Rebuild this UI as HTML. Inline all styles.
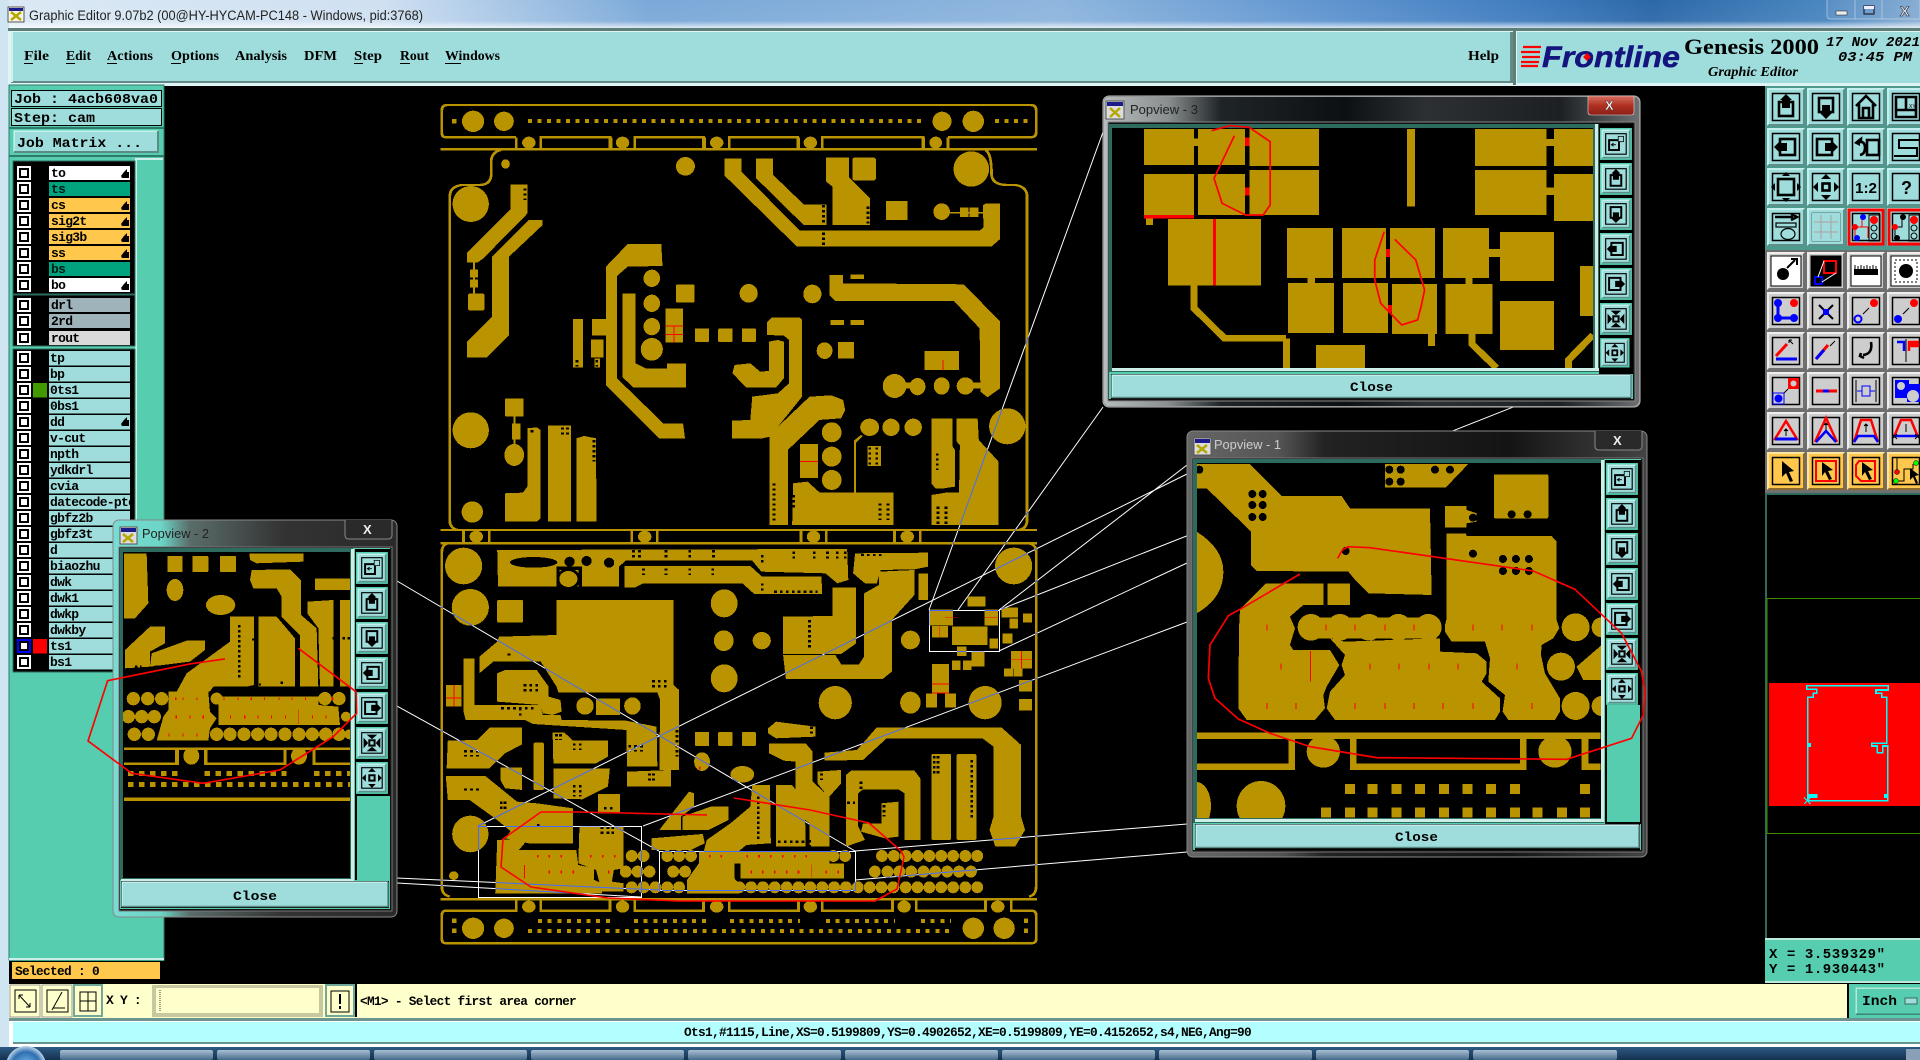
<!DOCTYPE html>
<html><head><meta charset="utf-8"><title>Graphic Editor</title>
<style>
html,body{margin:0;padding:0;background:#000;width:1920px;height:1060px;overflow:hidden}
svg{display:block}
.m{font:bold 13px "Liberation Mono",monospace;letter-spacing:-.7px;fill:#000}
.s{font:bold 14px "Liberation Serif",serif;fill:#000}
.pt{font:12.5px "Liberation Sans",sans-serif;fill:#222}
.g{fill:#ba9400}
.gl{fill:none;stroke:#ba9400;stroke-width:7}
.v{fill:none;stroke:#000;stroke-width:7;stroke-dasharray:7 8}
.r{fill:#f00}
.sc{fill:none;stroke:#f00;stroke-linejoin:round}
.px{shape-rendering:crispEdges}
.k{fill:none;stroke:#000;stroke-width:2.6}
.kk{fill:none;stroke:#000;stroke-width:1.2}
</style></head><body>
<svg xmlns="http://www.w3.org/2000/svg" width="1920" height="1060" viewBox="0 0 1920 1060">
<defs>
<linearGradient id="tb" x1="0" x2="1" y1="0" y2="0">
<stop offset="0" stop-color="#dbe9f5"/><stop offset=".2" stop-color="#cfe0f1"/><stop offset=".34" stop-color="#7aa8d8"/><stop offset=".55" stop-color="#8fb6de"/><stop offset=".7" stop-color="#5d93cf"/><stop offset=".8" stop-color="#3f7bbd"/><stop offset=".86" stop-color="#2c68a8"/><stop offset=".95" stop-color="#4a86c0"/><stop offset="1" stop-color="#8ab0d4"/></linearGradient>
<linearGradient id="tw" x1="0" x2="0" y1="0" y2="1"><stop offset="0" stop-color="#fff" stop-opacity="0"/><stop offset=".7" stop-color="#fff" stop-opacity=".05"/><stop offset="1" stop-color="#fff" stop-opacity=".95"/></linearGradient>
<linearGradient id="wg3" x1="0" x2="1" y1="0" y2="0"><stop offset="0" stop-color="#b7bdbd"/><stop offset=".12" stop-color="#8a8f90"/><stop offset=".22" stop-color="#1f2426"/><stop offset=".45" stop-color="#0c1013"/><stop offset=".6" stop-color="#2d3033"/><stop offset=".85" stop-color="#1d2023"/><stop offset="1" stop-color="#6d7072"/></linearGradient>
<linearGradient id="wg1" x1="0" x2="1" y1="0" y2="0"><stop offset="0" stop-color="#666"/><stop offset=".2" stop-color="#555"/><stop offset=".3" stop-color="#222"/><stop offset=".7" stop-color="#141414"/><stop offset="1" stop-color="#444"/></linearGradient>
<linearGradient id="wg2" x1="0" x2="1" y1="0" y2="0"><stop offset="0" stop-color="#79dcd4"/><stop offset=".17" stop-color="#6cd5c6"/><stop offset=".27" stop-color="#5a6d6a"/><stop offset=".6" stop-color="#333"/><stop offset="1" stop-color="#2a2a2a"/></linearGradient>
<linearGradient id="red" x1="0" x2="0" y1="0" y2="1"><stop offset="0" stop-color="#d87060"/><stop offset=".5" stop-color="#b03020"/><stop offset="1" stop-color="#8c2018"/></linearGradient>
<linearGradient id="task" x1="0" x2="0" y1="0" y2="1"><stop offset="0" stop-color="#2e5a85"/><stop offset="1" stop-color="#14304f"/></linearGradient>
<linearGradient id="tbt" x1="0" x2="0" y1="0" y2="1"><stop offset="0" stop-color="#a9bfd1"/><stop offset="1" stop-color="#466a8c"/></linearGradient>
<radialGradient id="orb"><stop offset="0" stop-color="#7ec0f0"/><stop offset=".7" stop-color="#2f6fb0"/><stop offset="1" stop-color="#bcd6e8"/></radialGradient>
<clipPath id="cp3"><rect x="1112" y="128" width="481" height="240"/></clipPath>
<clipPath id="cp1"><rect x="1197" y="463" width="404" height="355"/></clipPath>
<clipPath id="cp2"><rect x="123" y="552" width="227" height="326"/></clipPath>
<clipPath id="cpR"><rect x="1765" y="85" width="155" height="410"/></clipPath>

<g id="cb"><rect width="14" height="14" fill="#fff"/><rect x="2" y="2" width="10" height="10" fill="#000"/><rect x="4" y="4" width="6" height="6" fill="#fff"/></g>
<path id="hand" d="M0,7 L3,3 L6,0 L6,3 L8,3 V9 H1 Z" fill="#000"/>

<g id="bt"><rect width="38" height="38" fill="#5f8f8a"/><path d="M0,0H38L36,2H2V36L0,38Z" fill="#c5eeee"/><rect x="2" y="2" width="34" height="34" fill="#9fdcdc"/><rect x="5.5" y="5.5" width="27" height="27" fill="none" stroke="#000" stroke-width="1.500"/></g>
<g id="rim"><rect x="-2" y="-2" width="42" height="42" fill="#55cdae"/><use href="#bt"/></g>
<g id="bg"><rect width="38" height="38" fill="#707070"/><path d="M0,0H38L36,2H2V36L0,38Z" fill="#eee"/><rect x="2" y="2" width="34" height="34" fill="#cdcdcd"/><rect x="5.5" y="5.5" width="27" height="27" fill="none" stroke="#000" stroke-width="1.500"/></g>
<g id="bw"><rect width="38" height="38" fill="#707070"/><path d="M0,0H38L36,2H2V36L0,38Z" fill="#eee"/><rect x="2" y="2" width="34" height="34" fill="#cdcdcd"/><rect x="4" y="4" width="30" height="30" fill="#fff" stroke="#000" stroke-width="1"/></g>
<g id="by"><rect width="38" height="38" fill="#8a6a30"/><path d="M0,0H38L36,2H2V36L0,38Z" fill="#ffe4a0"/><rect x="2" y="2" width="34" height="34" fill="#ffc84d"/><rect x="5.5" y="5.5" width="27" height="27" fill="none" stroke="#000" stroke-width="1.500"/></g>

<g id="iu"><rect x="12" y="14" width="14" height="14" class="k"/><path d="M19,6L25,12H23V20H15V12H13Z"/></g>
<g id="id"><rect x="12" y="10" width="14" height="14" class="k"/><path d="M15,17H23V25H25L19,31L13,25H15Z"/></g>
<g id="il"><rect x="13" y="11" width="15" height="16" class="k"/><path d="M7,19L13,13V15H20V23H13V25Z"/></g>
<g id="ir"><rect x="10" y="11" width="15" height="16" class="k"/><path d="M31,19L25,13V15H18V23H25V25Z"/></g>
<g id="ifit"><rect x="11" y="11" width="16" height="16" class="k"/><path d="M19,4L23,8H15ZM19,34L15,30H23ZM4,19L8,15V23ZM34,19L30,23V15Z"/></g>
<g id="ifit2"><rect x="15.5" y="15.5" width="7" height="7" class="k"/><path d="M19,6L24,11H14ZM19,32L14,27H24ZM6,19L11,14V24ZM32,19L27,24V14Z"/></g>
<g id="iin"><rect x="15.5" y="15.5" width="7" height="7" class="k"/><path d="M12,8H26L19,14ZM12,30H26L19,24ZM8,12V26L14,19ZM30,12V26L24,19Z"/></g>
<g id="iw"><rect x="10" y="14" width="13" height="13" class="k"/><rect x="22" y="9" width="7" height="7" fill="#9fdcdc" stroke="#000"/><path d="M19,20H13M16,18L13,20L16,22" class="kk"/></g>
</defs>

<rect width="1920" height="1060" fill="#000"/>

<!-- title bar -->
<rect width="1920" height="30" fill="url(#tb)"/><rect width="1920" height="30" fill="url(#tw)"/>
<rect x="0" y="0" width="9" height="1060" fill="#cfe5f2"/>
<rect x="8" y="7" width="16" height="15" fill="#f5f5e8" stroke="#333" stroke-width=".8"/><rect x="9" y="8" width="14" height="3" fill="#1b1b8a"/><path d="M11,12L21,20M21,12L11,20" stroke="#b5a800" stroke-width="2.5"/>
<text x="29" y="20" style="font:13.5px 'Liberation Sans',sans-serif;fill:#222" textLength="394" lengthAdjust="spacingAndGlyphs">Graphic Editor 9.07b2 (00@HY-HYCAM-PC148 - Windows, pid:3768)</text>
<path d="M1827,0V15Q1827,19 1831,19H1920V0" fill="#7ea8cf" fill-opacity=".25" stroke="#dfeaf3" stroke-opacity=".5"/>
<path d="M1855,0V19M1882,0V19" stroke="#dfeaf3" stroke-opacity=".5"/>
<rect x="1836" y="11" width="11" height="4" fill="#eee" stroke="#333" stroke-width=".6"/>
<rect x="1864" y="6" width="10" height="8" fill="none" stroke="#223" stroke-width="1.2"/><rect x="1864" y="6" width="10" height="3" fill="#eef"/>
<text x="1900" y="16" style="font:bold 14px 'Liberation Sans',sans-serif;fill:#eee;stroke:#223;stroke-width:.6">X</text>

<!-- menu -->
<rect x="8" y="28" width="1912" height="58" fill="#dff5f5"/>
<rect x="8" y="28" width="1912" height="3" fill="#5d7f78"/>
<rect x="11" y="32" width="1501" height="51" fill="#9fdcdc"/>
<rect x="11" y="81" width="1501" height="2" fill="#648a85"/><rect x="11" y="32" width="2" height="50" fill="#cff0f0"/>
<rect x="1510" y="32" width="3" height="51" fill="#648a85"/>
<rect x="1517" y="32" width="403" height="51" fill="#9fdcdc"/><rect x="1513" y="30" width="3" height="55" fill="#5d7f78"/>
<text class="s" x="24" y="60" textLength="25" lengthAdjust="spacingAndGlyphs">File</text><rect x="24" y="63" width="9" height="1"/>
<text class="s" x="66" y="60" textLength="25" lengthAdjust="spacingAndGlyphs">Edit</text><rect x="66" y="63" width="9" height="1"/>
<text class="s" x="107" y="60" textLength="46" lengthAdjust="spacingAndGlyphs">Actions</text><rect x="107" y="63" width="10" height="1"/>
<text class="s" x="171" y="60" textLength="48" lengthAdjust="spacingAndGlyphs">Options</text><rect x="171" y="63" width="10" height="1"/>
<text class="s" x="235" y="60" textLength="52" lengthAdjust="spacingAndGlyphs">Analysis</text>
<text class="s" x="304" y="60" textLength="33" lengthAdjust="spacingAndGlyphs">DFM</text>
<text class="s" x="354" y="60" textLength="28" lengthAdjust="spacingAndGlyphs">Step</text><rect x="354" y="63" width="9" height="1"/>
<text class="s" x="400" y="60" textLength="29" lengthAdjust="spacingAndGlyphs">Rout</text><rect x="400" y="63" width="10" height="1"/>
<text class="s" x="445" y="60" textLength="55" lengthAdjust="spacingAndGlyphs">Windows</text><rect x="445" y="63" width="16" height="1"/>
<text class="s" x="1468" y="60" textLength="31" lengthAdjust="spacingAndGlyphs">Help</text>

<!-- logo -->
<path d="M1523,47H1541M1521,52H1540M1522,57H1540M1521,62H1539M1521,66H1538" stroke="#f00" stroke-width="2.2"/>
<text x="1542" y="67" style="font:italic bold 30px 'Liberation Sans',sans-serif;fill:#14147f;stroke:#14147f;stroke-width:.5" textLength="138" lengthAdjust="spacingAndGlyphs">Frontline</text>
<path d="M1583,67l4,-4 4,4 -4,4z" fill="#f00" transform="translate(0,-10)"/>
<text x="1684" y="54" style="font:bold 22px 'Liberation Serif',serif;fill:#000" textLength="135" lengthAdjust="spacingAndGlyphs">Genesis 2000</text>
<text x="1708" y="76" style="font:italic bold 14px 'Liberation Serif',serif;fill:#000" textLength="90" lengthAdjust="spacingAndGlyphs">Graphic Editor</text>
<text x="1826" y="46" style="font:italic bold 14px 'Liberation Mono',monospace;fill:#000" textLength="94" lengthAdjust="spacingAndGlyphs">17 Nov 2021</text>
<text x="1838" y="61" style="font:italic bold 14px 'Liberation Mono',monospace;fill:#000" textLength="74" lengthAdjust="spacingAndGlyphs">03:45 PM</text>

<!-- TOP BOARD -->
<g transform="translate(430,90) scale(.3954,.3333)" class="px">
<path class="gl" d="M218,142H42Q30,142 30,130V60Q30,45 45,45H1518Q1533,45 1533,60V128Q1533,142 1518,142H1310M27,178H1535M218,142V178M280,178V142H455V178M458,178V142M518,178V142H692V178M695,178V142M757,178V142H930V178M932,178V142M992,178V142H1247V178M1249,178V142M1310,178V142"/>
<g class="g"><ellipse cx="109" cy="94" rx="28" ry="32"/><ellipse cx="187" cy="94" rx="25" ry="29"/><ellipse cx="1295" cy="94" rx="24" ry="29"/><ellipse cx="1374" cy="94" rx="27" ry="32"/>
<rect x="56" y="87" width="11" height="13"/>
<ellipse cx="250" cy="158" rx="17" ry="18"/><ellipse cx="487" cy="158" rx="17" ry="18"/><ellipse cx="725" cy="158" rx="17" ry="18"/><ellipse cx="962" cy="158" rx="17" ry="18"/><ellipse cx="1279" cy="158" rx="16" ry="18"/></g>
<path d="M248,93H1250M1429,93H1515" fill="none" stroke="#ba9400" stroke-width="13" stroke-dasharray="10 14"/>
<path class="gl" d="M50,1290V320Q50,290 80,285H125Q155,285 155,250V210Q158,185 180,180M1405,180Q1420,190 1420,250Q1420,285 1460,285H1480Q1510,290 1510,320V1290Q1510,1315 1490,1320M50,1290Q50,1315 70,1320M27,1320H1535"/>
<g class="g">
<ellipse cx="103" cy="342" rx="46" ry="54"/><ellipse cx="103" cy="1021" rx="46" ry="54"/><ellipse cx="107" cy="1266" rx="27" ry="32"/><ellipse cx="1369" cy="237" rx="45" ry="53"/><ellipse cx="1460" cy="1009" rx="46" ry="54"/><ellipse cx="646" cy="229" rx="24" ry="28"/><ellipse cx="191" cy="222" rx="11" ry="14"/>
<polygon points="203,283 247,283 247,370 135,505 120,518 94,518 94,488 203,358"/>
<polygon points="250,390 285,390 285,405 200,500 200,735 143,803 94,803 94,755 157,680 157,500"/>
<rect x="101" y="538" width="20" height="24"/><rect x="101" y="568" width="20" height="24"/><rect x="109" y="518" width="5" height="92"/><rect x="96" y="610" width="42" height="52" rx="6"/>
<polygon points="745,205 788,205 788,245 935,422 1390,422 1400,412 1398,345 1408,340 1442,340 1442,447 1420,470 928,470 745,257"/>
<polygon points="825,205 868,205 868,255 945,343 1003,343 1003,405 945,405 825,265"/>
<polygon points="1002,202 1060,202 1060,262 1113,325 1113,405 1018,405 1018,290 1002,275"/>
<rect x="1068" y="202" width="60" height="70" rx="8"/><rect x="1153" y="333" width="55" height="57"/><ellipse cx="1294" cy="365" rx="21" ry="25"/><rect x="1315" y="366" width="85" height="4"/><rect x="1340" y="353" width="22" height="28"/><rect x="1365" y="353" width="22" height="28"/>
<polygon points="500,462 585,462 588,528 500,530 473,558 473,865 590,1000 640,1000 645,1046 580,1046 445,885 445,530"/>
<polygon points="487,610 520,610 520,820 545,835 600,835 600,820 647,820 647,893 515,893 487,862"/>
<ellipse cx="561" cy="565" rx="21" ry="26"/><ellipse cx="561" cy="640" rx="21" ry="26"/><ellipse cx="561" cy="710" rx="21" ry="26"/><ellipse cx="561" cy="778" rx="28" ry="34"/>
<rect x="622" y="583" width="47" height="55" rx="5"/><ellipse cx="806" cy="610" rx="23" ry="28"/><ellipse cx="967" cy="612" rx="23" ry="28"/>
<rect x="362" y="687" width="25" height="145"/><rect x="410" y="687" width="35" height="50"/><rect x="407" y="748" width="32" height="55"/><rect x="416" y="805" width="14" height="28"/>
<rect x="595" y="655" width="45" height="103"/>
<rect x="670" y="715" width="36" height="41" rx="3"/><rect x="729" y="715" width="36" height="41" rx="3"/><rect x="789" y="715" width="35" height="41" rx="3"/>
<polygon points="852,697 865,682 935,682 941,690 941,920 860,1040 838,1046 764,1046 764,992 810,990 815,920 880,910 908,880 908,750 895,737 852,735"/>
<polygon points="857,755 880,750 895,755 895,865 875,893 800,893 765,850 770,825 810,820 835,845 857,843"/>
<ellipse cx="998" cy="782" rx="20" ry="25"/><rect x="1032" y="756" width="40" height="50"/>
<polygon points="1010,555 1045,555 1045,580 1350,583 1442,695 1442,895 1410,922 1392,905 1390,715 1325,633 1025,633 1010,615"/>
<rect x="1063" y="553" width="34" height="14"/><rect x="1013" y="690" width="34" height="15"/><rect x="1063" y="690" width="34" height="15"/>
<rect x="1250" y="783" width="88" height="57"/>
<ellipse cx="1175" cy="888" rx="30" ry="36"/><ellipse cx="1233" cy="890" rx="20" ry="26"/><ellipse cx="1294" cy="888" rx="20" ry="26"/><ellipse cx="1354" cy="888" rx="22" ry="26"/><rect x="1190" y="878" width="30" height="18"/><rect x="1370" y="878" width="30" height="18"/>
<polygon points="960,920 1015,916 1045,930 1050,960 1040,985 985,990 905,1080 905,1305 858,1305 858,1035"/>
<ellipse cx="1016" cy="1027" rx="25" ry="30"/><ellipse cx="1016" cy="1100" rx="25" ry="30"/><ellipse cx="1016" cy="1170" rx="25" ry="30"/><rect x="936" y="1062" width="45" height="102"/>
<polygon points="918,1180 955,1175 985,1207 1172,1207 1172,1305 916,1305"/>
<polygon points="1072,1207 1078,1207 1078,1057 1095,1038 1090,1035 1072,1052"/>
<ellipse cx="1112" cy="1012" rx="24" ry="26"/><ellipse cx="1166" cy="1012" rx="22" ry="26"/><ellipse cx="1222" cy="1012" rx="22" ry="26"/><rect x="1106" y="1068" width="35" height="60"/>
<polygon points="1268,985 1322,985 1322,1070 1328,1080 1328,1190 1300,1195 1278,1195 1268,1180"/>
<polygon points="1332,985 1385,985 1388,1050 1438,1115 1438,1305 1268,1305 1268,1215 1305,1208 1338,1208 1340,1065 1332,1055"/>
<rect x="190" y="925" width="47" height="55" rx="4"/><rect x="207" y="1000" width="22" height="48"/><rect x="211" y="980" width="5" height="90"/><ellipse cx="213" cy="1095" rx="25" ry="33"/>
<polygon points="246,1015 270,1012 280,1020 280,1285 270,1295 190,1295 190,1210 235,1208 246,1190"/>
<rect x="298" y="1007" width="58" height="288"/>
<polygon points="370,1045 390,1038 420,1045 421,1295 370,1295"/>
</g>
<rect x="595" y="706" width="45" height="3" class="r"/><rect x="595" y="732" width="45" height="3" class="r"/><rect x="616" y="706" width="2" height="52" class="r"/><rect x="1296" y="810" width="3" height="30" class="r"/><rect x="936" y="1113" width="45" height="3" class="r"/>
<path class="v" d="M240,295V330M995,345V405M995,428V470M1108,350V400M870,1180V1295M920,1215V1260M1158,1240V1290M1138,1240V1290M1305,1250V1305M1285,1250V1305M1283,1090V1140M1265,1090V1140M1112,1072V1125M1130,1072V1125M348,1012V1035M335,1012V1035M415,1050V1115M258,1020V1035M372,810V830M422,810V830"/>
<rect x="405" y="737" width="38" height="4" fill="#000"/>
</g>

<!-- BOTTOM BOARD -->
<g transform="translate(430,530) scale(.3954,.3333)" class="px">
<path class="gl" d="M27,40H1535M45,40Q30,45 30,65V1070Q30,1095 50,1100M1515,40Q1533,45 1533,65V1070Q1533,1095 1515,1100M27,1108H1535M85,0V36M150,0V36M510,0V36M575,0V36M938,0V36M1002,0V36M1175,0V36M1240,0V36M218,1108V1142H42Q30,1142 30,1155V1228Q30,1240 42,1240H1520Q1533,1240 1533,1228V1155Q1533,1142 1520,1142H1470V1108M280,1108V1142H455V1108M518,1108V1142H692V1108M757,1108V1142H932V1108M992,1108V1142H1170V1108M1230,1108V1142H1405V1108"/>
<g class="g">
<ellipse cx="117" cy="20" rx="17" ry="18"/><ellipse cx="543" cy="20" rx="17" ry="18"/><ellipse cx="970" cy="20" rx="17" ry="18"/><ellipse cx="1207" cy="20" rx="17" ry="18"/>
<ellipse cx="250" cy="1130" rx="17" ry="18"/><ellipse cx="487" cy="1130" rx="17" ry="18"/><ellipse cx="725" cy="1130" rx="17" ry="18"/><ellipse cx="962" cy="1130" rx="17" ry="18"/><ellipse cx="1199" cy="1130" rx="17" ry="18"/><ellipse cx="1436" cy="1130" rx="17" ry="18"/>
<ellipse cx="109" cy="1195" rx="28" ry="32"/><ellipse cx="187" cy="1195" rx="25" ry="29"/><ellipse cx="1374" cy="1195" rx="27" ry="32"/><ellipse cx="1452" cy="1195" rx="27" ry="32"/>
<rect x="56" y="1166" width="11" height="13"/><rect x="56" y="1196" width="11" height="13"/><rect x="1502" y="1166" width="11" height="13"/><rect x="1502" y="1196" width="11" height="13"/>
<ellipse cx="85" cy="108" rx="47" ry="55"/><ellipse cx="102" cy="232" rx="47" ry="55"/><ellipse cx="1476" cy="108" rx="47" ry="55"/><ellipse cx="744" cy="220" rx="34" ry="42"/><ellipse cx="743" cy="332" rx="25" ry="31"/><ellipse cx="839" cy="332" rx="23" ry="26"/><ellipse cx="744" cy="445" rx="34" ry="42"/><ellipse cx="1025" cy="518" rx="42" ry="50"/><ellipse cx="1215" cy="518" rx="26" ry="33"/><ellipse cx="1215" cy="330" rx="24" ry="28"/><ellipse cx="1404" cy="518" rx="42" ry="50"/><ellipse cx="102" cy="912" rx="46" ry="55"/><ellipse cx="60" cy="1037" rx="12" ry="13"/>
<polygon points="170,60 1055,57 1058,150 1030,160 1000,130 838,125 815,92 495,92 478,110 478,170 172,170"/>
<polygon points="492,108 810,108 840,140 990,140 992,192 820,192 790,160 540,160 520,172 492,172"/>
<polygon points="1075,70 1260,68 1260,110 1225,118 1140,120 1130,160 1100,160 1070,130"/>
<polygon points="893,260 1018,258 1018,172 1078,172 1078,340 1040,372 893,372"/>
<polygon points="1135,125 1225,120 1225,195 1168,270 1168,425 1145,447 900,447 893,375 1025,375 1040,403 1085,403 1098,380 1098,190 1135,165"/>
<rect x="1235" y="130" width="25" height="80"/>
<polygon points="320,210 616,210 616,465 630,480 630,720 580,720 582,510 575,488 325,488 320,470 280,395 160,395 125,430 125,380 170,335 175,320 320,315"/>
<polygon points="170,430 190,420 270,420 300,470 300,500 330,510 333,545 310,555 285,550 280,525 170,515"/>
<polygon points="85,385 112,385 112,525 280,525 285,555 330,555 333,570 495,572 573,590 575,710 498,710 497,600 260,582 240,570 90,570 85,545"/>
<rect x="170" y="210" width="65" height="68" rx="4"/>
<ellipse cx="392" cy="528" rx="22" ry="26"/><rect x="420" y="505" width="60" height="50"/><ellipse cx="512" cy="528" rx="21" ry="26"/>
<polygon points="45,632 120,630 152,592 233,592 233,643 190,670 150,715 42,715"/>
<polygon points="310,608 340,608 362,632 450,632 450,680 420,700 312,700"/>
<polygon points="312,715 455,715 450,770 385,808 312,805"/>
<polygon points="178,712 233,712 233,780 190,775 178,750"/>
<rect x="262" y="638" width="26" height="142" rx="4"/>
<polygon points="40,738 140,738 220,815 270,820 362,835 362,940 250,940 215,915 170,870 100,810 45,810"/>
<rect x="425" y="792" width="55" height="58"/>
<polygon points="498,725 610,720 610,770 498,770"/>
<rect x="670" y="606" width="36" height="42" rx="3"/><rect x="729" y="606" width="36" height="42" rx="3"/><rect x="789" y="606" width="35" height="42" rx="3"/>
<ellipse cx="688" cy="695" rx="20" ry="28"/><ellipse cx="790" cy="733" rx="30" ry="25"/>
<polygon points="855,595 875,575 975,590 975,620 875,625 855,610"/>
<polygon points="857,640 950,640 968,665 968,755 1000,790 1000,950 960,950 960,880 925,850 925,695 895,692 857,670"/>
<polygon points="815,765 860,765 862,940 800,945 780,965 690,975 700,930 760,880 810,830"/>
<polygon points="875,765 915,765 948,810 950,950 875,950"/>
<polygon points="980,725 1040,720 1040,760 1010,800 1010,950 1000,950 1000,790 980,760"/>
<polygon points="1130,592 1445,592 1495,645 1495,860 1505,900 1480,950 1430,950 1415,900 1425,860 1425,650 1397,625 1155,625 1095,690 998,692 998,668 1080,660"/>
<polygon points="1052,735 1065,722 1225,722 1240,745 1240,930 1200,930 1200,790 1185,778 1095,778 1083,790 1083,890 1100,930 1052,950"/>
<polygon points="1142,820 1185,815 1185,920 1150,925 1090,905 1095,880 1142,880"/>
<rect x="1268" y="672" width="50" height="258" rx="5"/><rect x="1332" y="672" width="50" height="258" rx="5"/>
<polygon points="580,900 655,785 668,790 668,830 635,860 635,900"/>
<polygon points="638,860 710,830 755,830 755,870 705,900 638,900"/>
<polygon points="560,925 690,912 695,940 660,960 560,960"/>
<polygon points="250,830 362,835 362,940 250,940 190,925"/>
<polygon points="378,890 490,890 490,1015 465,1020 460,1055 490,1060 490,1085 435,1085 420,1020 375,1000"/>
<polygon points="170,930 250,925 225,960 370,960 375,1005 415,1015 415,1050 435,1060 435,1090 165,1090"/>
<polygon points="680,965 770,965 770,1045 780,1060 780,1090 650,1090 650,1050 680,1000"/>
<rect x="770" y="963" width="240" height="37"/><rect x="785" y="1000" width="262" height="45"/>
<ellipse cx="240" cy="978" rx="15" ry="18"/><ellipse cx="510" cy="978" rx="15" ry="18"/><ellipse cx="540" cy="978" rx="15" ry="18"/><ellipse cx="600" cy="978" rx="15" ry="18"/><ellipse cx="630" cy="978" rx="15" ry="18"/><ellipse cx="660" cy="978" rx="15" ry="18"/><ellipse cx="1020" cy="978" rx="15" ry="18"/><ellipse cx="1050" cy="978" rx="15" ry="18"/><ellipse cx="1143" cy="978" rx="15" ry="18"/><ellipse cx="1173" cy="978" rx="15" ry="18"/><ellipse cx="1203" cy="978" rx="15" ry="18"/><ellipse cx="1233" cy="978" rx="15" ry="18"/><ellipse cx="1263" cy="978" rx="15" ry="18"/><ellipse cx="1293" cy="978" rx="15" ry="18"/><ellipse cx="1323" cy="978" rx="15" ry="18"/><ellipse cx="1354" cy="978" rx="15" ry="18"/><ellipse cx="1384" cy="978" rx="15" ry="18"/>
<ellipse cx="495" cy="1025" rx="15" ry="18"/><ellipse cx="525" cy="1025" rx="15" ry="18"/><ellipse cx="555" cy="1025" rx="15" ry="18"/><ellipse cx="615" cy="1025" rx="15" ry="18"/><ellipse cx="645" cy="1025" rx="15" ry="18"/><ellipse cx="1125" cy="1025" rx="15" ry="18"/><ellipse cx="1157" cy="1025" rx="15" ry="18"/><ellipse cx="1187" cy="1025" rx="15" ry="18"/><ellipse cx="1217" cy="1025" rx="15" ry="18"/><ellipse cx="1248" cy="1025" rx="15" ry="18"/><ellipse cx="1278" cy="1025" rx="15" ry="18"/><ellipse cx="1308" cy="1025" rx="15" ry="18"/><ellipse cx="1338" cy="1025" rx="15" ry="18"/><ellipse cx="1368" cy="1025" rx="15" ry="18"/>
<ellipse cx="510" cy="1072" rx="15" ry="18"/><ellipse cx="540" cy="1072" rx="15" ry="18"/><ellipse cx="570" cy="1072" rx="15" ry="18"/><ellipse cx="600" cy="1072" rx="15" ry="18"/><ellipse cx="630" cy="1072" rx="15" ry="18"/><ellipse cx="782" cy="1072" rx="15" ry="18"/><ellipse cx="812" cy="1072" rx="15" ry="18"/><ellipse cx="842" cy="1072" rx="15" ry="18"/><ellipse cx="872" cy="1072" rx="15" ry="18"/><ellipse cx="902" cy="1072" rx="15" ry="18"/><ellipse cx="932" cy="1072" rx="15" ry="18"/><ellipse cx="962" cy="1072" rx="15" ry="18"/><ellipse cx="992" cy="1072" rx="15" ry="18"/><ellipse cx="1022" cy="1072" rx="15" ry="18"/><ellipse cx="1052" cy="1072" rx="15" ry="18"/><ellipse cx="1082" cy="1072" rx="15" ry="18"/><ellipse cx="1112" cy="1072" rx="15" ry="18"/><ellipse cx="1142" cy="1072" rx="15" ry="18"/><ellipse cx="1172" cy="1072" rx="15" ry="18"/><ellipse cx="1203" cy="1072" rx="15" ry="18"/><ellipse cx="1233" cy="1072" rx="15" ry="18"/><ellipse cx="1263" cy="1072" rx="15" ry="18"/><ellipse cx="1293" cy="1072" rx="15" ry="18"/><ellipse cx="1323" cy="1072" rx="15" ry="18"/><ellipse cx="1354" cy="1072" rx="15" ry="18"/><ellipse cx="1384" cy="1072" rx="15" ry="18"/>
<rect x="1263" y="238" width="60" height="48"/><rect x="1270" y="288" width="40" height="35"/><rect x="1320" y="290" width="90" height="55"/><rect x="1360" y="200" width="45" height="30"/><rect x="1402" y="238" width="35" height="48"/><rect x="1445" y="232" width="42" height="30"/><rect x="1465" y="265" width="22" height="30"/><rect x="1500" y="250" width="22" height="28"/><rect x="1448" y="310" width="25" height="30"/><rect x="1415" y="325" width="22" height="30"/><rect x="1320" y="392" width="22" height="28"/><rect x="1348" y="392" width="22" height="28"/><rect x="1370" y="365" width="32" height="45"/><rect x="1470" y="363" width="52" height="52"/><rect x="1452" y="415" width="22" height="25"/><rect x="1476" y="415" width="22" height="25"/><rect x="1270" y="402" width="42" height="88"/><rect x="1254" y="490" width="28" height="42"/><rect x="1302" y="490" width="28" height="42"/><rect x="1490" y="450" width="32" height="35"/><rect x="1490" y="507" width="32" height="35"/><rect x="40" y="465" width="40" height="65"/><rect x="1333" y="350" width="24" height="28"/>
</g>
<ellipse cx="350" cy="147" rx="30" ry="32" fill="#000"/><ellipse cx="350" cy="147" rx="23" ry="24" fill="#ba9400"/>
<rect x="320" y="110" width="62" height="10" fill="#000"/><rect x="320" y="110" width="8" height="60" fill="#000"/><rect x="376" y="110" width="8" height="60" fill="#000"/>
<ellipse cx="262" cy="97" rx="60" ry="16" fill="#000"/><ellipse cx="353" cy="95" rx="13" ry="15" fill="#000"/><ellipse cx="396" cy="93" rx="13" ry="15" fill="#000"/><ellipse cx="453" cy="98" rx="13" ry="15" fill="#000"/>
<path class="v" d="M515,60V85M530,60V85M597,60V85M657,60V85M717,60V85M840,75V100M920,65V85M972,65V85M1005,65V85M1030,65V85M1050,65V85M540,115V135M597,115V135M657,115V135M715,115V135M840,160V185M870,185H980M960,270V360M1090,75H1150M240,462V485M255,462V485M270,462V485M565,450V480M580,450V480M595,450V480M180,535H270M228,535V560M320,612V630M330,612V630M365,640V660M380,640V660M90,660V680M105,660V680M120,660V680M90,775V790M105,775V790M120,775V790M505,645V665M520,645V665M535,645V665M555,730V760M565,730V760M365,765V800M380,765V800M625,600V680M200,370V385M180,815V845M190,815V845M435,890V915M450,890V915M462,890V915M830,800V930M1275,678V730M1285,678V730M1370,690V870M1090,755V780M1040,818H1075M1148,825V860M965,590V610M990,730V750M270,885H285M440,835H465M960,930V950M880,935H950"/>
<g class="r"><rect x="40" y="503" width="40" height="3"/><rect x="60" y="465" width="2" height="65"/><rect x="1270" y="460" width="42" height="3"/><rect x="1270" y="488" width="42" height="3"/><rect x="1288" y="288" width="2" height="35"/><rect x="1302" y="262" width="32" height="2"/><rect x="1402" y="262" width="34" height="2"/><rect x="1495" y="363" width="2" height="52"/><rect x="1470" y="388" width="52" height="2"/><rect x="238" y="1005" width="2" height="40"/><rect x="963" y="1003" width="2" height="40"/>
<rect x="405" y="975" width="4" height="8"/><rect x="435" y="975" width="4" height="8"/><rect x="465" y="975" width="4" height="8"/><rect x="300" y="1022" width="4" height="8"/><rect x="330" y="1022" width="4" height="8"/><rect x="360" y="1022" width="4" height="8"/><rect x="450" y="1022" width="4" height="8"/><rect x="810" y="1022" width="4" height="8"/><rect x="840" y="1022" width="4" height="8"/><rect x="870" y="1022" width="4" height="8"/><rect x="900" y="1022" width="4" height="8"/><rect x="930" y="1022" width="4" height="8"/><rect x="1000" y="1022" width="4" height="8"/><rect x="1030" y="1022" width="4" height="8"/><rect x="800" y="975" width="4" height="8"/><rect x="830" y="975" width="4" height="8"/><rect x="860" y="975" width="4" height="8"/><rect x="890" y="975" width="4" height="8"/><rect x="920" y="975" width="4" height="8"/><rect x="950" y="975" width="4" height="8"/><rect x="270" y="975" width="4" height="8"/><rect x="300" y="975" width="4" height="8"/><rect x="330" y="975" width="4" height="8"/><rect x="705" y="975" width="4" height="8"/><rect x="735" y="975" width="4" height="8"/><rect x="680" y="710" width="4" height="8"/></g>
</g>
<!-- strip pads -->
<g fill="none" stroke="#ba9400" stroke-width="4.3" stroke-dasharray="4 5.7" class="px">
<path d="M538,921H610M634,921H706M730,921H800M826,921H895M921,921H951"/><path d="M528,931H951"/></g>

<!-- Projection lines -->
<g style="mix-blend-mode:difference" stroke="#fff" stroke-width="1" fill="none">
<rect x="478.5" y="826.5" width="163" height="71"/><rect x="929.5" y="610.5" width="70" height="41"/><rect x="659.5" y="851.5" width="196" height="39"/>
<path d="M1103,132L929,610M1103,407L958,610M1640,357L999,610M1187,474L478,826M1187,465L999,610M1187,563L999,651M1187,622L643,826M1187,824L855,851M1187,852L855,880M397,581L855,851M397,706L659,851M397,878L659,890M397,883L641,897"/>
</g>
<path class="sc" stroke-width="1.6" d="M707,815L624,813 576,812 541,812 503,839 501,867 531,887 608,898 679,901 875,901 897,889 904,857 901,851 869,823 810,810 734,798"/>

<!-- LEFT PANEL -->
<rect x="9" y="85" width="155" height="876" fill="#55cdae"/>
<rect x="9" y="85" width="155" height="875" fill="none" stroke="#2e7b6c" stroke-width="1"/>
<rect x="11.5" y="90.5" width="150" height="16" fill="#9fdcdc" stroke="#000"/>
<rect x="11.5" y="108.5" width="150" height="17" fill="#9fdcdc" stroke="#000"/>
<text style="font:bold 14px 'Liberation Mono',monospace" x="14" y="103" textLength="144" lengthAdjust="spacingAndGlyphs">Job : 4acb608va0</text>
<text style="font:bold 14px 'Liberation Mono',monospace" x="14" y="122" textLength="81" lengthAdjust="spacingAndGlyphs">Step: cam</text>
<rect x="9" y="127" width="155" height="2" fill="#2e7b6c"/><rect x="9" y="155" width="155" height="2" fill="#2e7b6c"/>
<rect x="14" y="131" width="144" height="21" fill="#9fdcdc"/><path d="M14,152V131H158" stroke="#dff" fill="none"/><path d="M14,152H158V131" stroke="#5c8a85" stroke-width="2" fill="none"/>
<text style="font:bold 14px 'Liberation Mono',monospace" x="17" y="147" textLength="125" lengthAdjust="spacingAndGlyphs">Job Matrix ...</text>
<rect x="135" y="158" width="28" height="2" fill="#cdeee6"/><rect x="135" y="158" width="2" height="520" fill="#cdeee6"/>
<g class="px">
<rect x="13" y="161" width="122" height="133" fill="#000" stroke="#2e6b5f"/><rect x="13" y="295" width="122" height="51" fill="#000" stroke="#2e6b5f"/><rect x="13" y="349" width="122" height="323" fill="#000" stroke="#2e6b5f"/>
<rect x="49" y="166" width="81" height="14" fill="#fff"/><rect x="49" y="182" width="81" height="14" fill="#00a37e"/><rect x="49" y="198" width="81" height="14" fill="#ffc84d"/><rect x="49" y="214" width="81" height="14" fill="#ffc84d"/><rect x="49" y="230" width="81" height="14" fill="#ffc84d"/><rect x="49" y="246" width="81" height="14" fill="#ffc84d"/><rect x="49" y="262" width="81" height="14" fill="#00a37e"/><rect x="49" y="278" width="81" height="14" fill="#fff"/>
<rect x="49" y="298" width="81" height="14" fill="#9fb3ba"/><rect x="49" y="314" width="81" height="14" fill="#9fb3ba"/><rect x="49" y="331" width="81" height="14" fill="#d9d9d9"/>
<rect x="49" y="351" width="81" height="14.5" fill="#9fdcdc"/><rect x="49" y="367" width="81" height="14.5" fill="#9fdcdc"/><rect x="49" y="383" width="81" height="14.5" fill="#9fdcdc"/><rect x="49" y="399" width="81" height="14.5" fill="#9fdcdc"/><rect x="49" y="415" width="81" height="14.5" fill="#9fdcdc"/><rect x="49" y="431" width="81" height="14.5" fill="#9fdcdc"/><rect x="49" y="447" width="81" height="14.5" fill="#9fdcdc"/><rect x="49" y="463" width="81" height="14.5" fill="#9fdcdc"/><rect x="49" y="479" width="81" height="14.5" fill="#9fdcdc"/><rect x="49" y="495" width="81" height="14.5" fill="#9fdcdc"/><rect x="49" y="511" width="81" height="14.5" fill="#9fdcdc"/><rect x="49" y="527" width="81" height="14.5" fill="#9fdcdc"/><rect x="49" y="543" width="81" height="14.5" fill="#9fdcdc"/><rect x="49" y="559" width="81" height="14.5" fill="#9fdcdc"/><rect x="49" y="575" width="81" height="14.5" fill="#9fdcdc"/><rect x="49" y="591" width="81" height="14.5" fill="#9fdcdc"/><rect x="49" y="607" width="81" height="14.5" fill="#9fdcdc"/><rect x="49" y="623" width="81" height="14.5" fill="#9fdcdc"/><rect x="49" y="639" width="81" height="14.5" fill="#9fdcdc"/><rect x="49" y="655" width="81" height="14.5" fill="#9fdcdc"/>
<rect x="33" y="383" width="14" height="14.5" fill="#419b00"/><rect x="33" y="639" width="14" height="14.5" fill="#f00"/>
<use href="#cb" x="17" y="166"/><use href="#cb" x="17" y="182"/><use href="#cb" x="17" y="198"/><use href="#cb" x="17" y="214"/><use href="#cb" x="17" y="230"/><use href="#cb" x="17" y="246"/><use href="#cb" x="17" y="262"/><use href="#cb" x="17" y="278"/>
<use href="#cb" x="17" y="298"/><use href="#cb" x="17" y="314"/><use href="#cb" x="17" y="331"/>
<use href="#cb" x="17" y="351"/><use href="#cb" x="17" y="367"/><use href="#cb" x="17" y="383"/><use href="#cb" x="17" y="399"/><use href="#cb" x="17" y="415"/><use href="#cb" x="17" y="431"/><use href="#cb" x="17" y="447"/><use href="#cb" x="17" y="463"/><use href="#cb" x="17" y="479"/><use href="#cb" x="17" y="495"/><use href="#cb" x="17" y="511"/><use href="#cb" x="17" y="527"/><use href="#cb" x="17" y="543"/><use href="#cb" x="17" y="559"/><use href="#cb" x="17" y="575"/><use href="#cb" x="17" y="591"/><use href="#cb" x="17" y="607"/><use href="#cb" x="17" y="623"/>
<rect x="17" y="639" width="14" height="14" fill="#00f"/><rect x="19" y="641" width="10" height="10" fill="#000"/><rect x="21" y="643" width="6" height="6" fill="#fff"/>
<use href="#cb" x="17" y="655"/>
</g>
<use href="#hand" x="121" y="169"/><use href="#hand" x="121" y="201"/><use href="#hand" x="121" y="217"/><use href="#hand" x="121" y="233"/><use href="#hand" x="121" y="249"/><use href="#hand" x="121" y="281"/><use href="#hand" x="121" y="417"/>
<text class="m" x="51" y="177">to</text><text class="m" x="51" y="193" style="fill:#001a14">ts</text><text class="m" x="51" y="209">cs</text><text class="m" x="51" y="225">sig2t</text><text class="m" x="51" y="241">sig3b</text><text class="m" x="51" y="257">ss</text><text class="m" x="51" y="273" style="fill:#001a14">bs</text><text class="m" x="51" y="289">bo</text>
<text class="m" x="51" y="309">drl</text><text class="m" x="51" y="325">2rd</text><text class="m" x="51" y="342">rout</text>
<text class="m" x="50" y="362">tp</text><text class="m" x="50" y="378">bp</text><text class="m" x="50" y="394">0ts1</text><text class="m" x="50" y="410">0bs1</text><text class="m" x="50" y="426">dd</text><text class="m" x="50" y="442">v-cut</text><text class="m" x="50" y="458">npth</text><text class="m" x="50" y="474">ydkdrl</text><text class="m" x="50" y="490">cvia</text>
<svg x="49" y="495" width="81" height="15"><text class="m" x="1" y="11">datecode-pte</text></svg>
<text class="m" x="50" y="522">gbfz2b</text><text class="m" x="50" y="538">gbfz3t</text><text class="m" x="50" y="554">d</text><text class="m" x="50" y="570">biaozhu</text><text class="m" x="50" y="586">dwk</text><text class="m" x="50" y="602">dwk1</text><text class="m" x="50" y="618">dwkp</text><text class="m" x="50" y="634">dwkby</text><text class="m" x="50" y="650">ts1</text><text class="m" x="50" y="666">bs1</text>
<rect x="11.5" y="961.5" width="149" height="18" fill="#ffc84d" stroke="#000"/>
<text class="m" x="15" y="975" textLength="84" lengthAdjust="spacingAndGlyphs">Selected : 0</text>
<rect x="9" y="958" width="155" height="2" fill="#cdeee6"/>

<!-- bottom row -->
<rect x="9" y="984" width="1911" height="34" fill="#ffffcc"/>
<g class="px">
<rect x="10" y="985" width="30" height="32" fill="#ffffcc" stroke="#999"/><rect x="15" y="990" width="21" height="22" fill="none" stroke="#000"/>
<rect x="42" y="985" width="30" height="32" fill="#ffffcc" stroke="#999"/><rect x="47" y="990" width="21" height="22" fill="none" stroke="#000"/>
<rect x="73" y="984" width="30" height="33" fill="#70a89a"/><rect x="75" y="986" width="26" height="29" fill="#ffffcc"/><rect x="80" y="992" width="16" height="19" fill="none" stroke="#000"/><path d="M88,992V1011M80,1001H96" stroke="#000"/>
<rect x="152" y="985" width="171" height="32" fill="#c8c8a0"/><rect x="156" y="988" width="163" height="25" fill="#ffffcc"/>
<rect x="325" y="984" width="30" height="33" fill="#70a89a"/><rect x="327" y="986" width="26" height="29" fill="#ffffcc"/><rect x="331" y="991" width="18" height="21" fill="none" stroke="#000"/><rect x="339" y="994" width="2" height="10"/><rect x="339" y="1006" width="2" height="3"/>
<rect x="355" y="984" width="2" height="33" fill="#000"/>
<rect x="1847" y="984" width="2" height="34" fill="#000"/>
<rect x="1849" y="984" width="71" height="34" fill="#55cdae"/><path d="M1856,1014V988H1920" fill="none" stroke="#b5ead9" stroke-width="1.5"/><path d="M1856,1014H1920" stroke="#3c8878" stroke-width="1.5"/>
<rect x="1905" y="998" width="12" height="6" fill="#9fdcdc" stroke="#3c6a60"/>
</g>
<path d="M19,995L30,1007M19,995V999M19,995H23M30,1007H26M30,1007V1003" stroke="#000" fill="none"/>
<path d="M52,1010L62,992M53,1008H65" stroke="#000" fill="none"/>
<text class="m" x="106" y="1004" textLength="35" lengthAdjust="spacing">X Y :</text>
<path d="M160,990V1011" stroke="#333" stroke-dasharray="1 1"/>
<text class="m" x="360" y="1005" textLength="216" lengthAdjust="spacingAndGlyphs">&lt;M1&gt; - Select first area corner</text>
<text x="1862" y="1005" style="font:bold 14px 'Liberation Mono',monospace;fill:#000" textLength="35" lengthAdjust="spacingAndGlyphs">Inch</text>

<!-- status -->
<rect x="9" y="1018" width="1911" height="29" fill="#fff"/>
<rect x="9" y="1018" width="1911" height="3" fill="#6b9490"/>
<rect x="13" y="1022" width="1907" height="20" fill="#b3ffff"/>
<rect x="13" y="1042" width="1907" height="2" fill="#6b9490"/>
<text class="m" x="684" y="1036" textLength="567" lengthAdjust="spacingAndGlyphs">Ots1,#1115,Line,XS=0.5199809,YS=0.4902652,XE=0.5199809,YE=0.4152652,s4,NEG,Ang=90</text>

<!-- taskbar -->
<rect y="1047" width="1920" height="13" fill="url(#task)"/>
<rect x="60" y="1050" width="153" height="10" fill="url(#tbt)" rx="2"/><rect x="217" y="1050" width="153" height="10" fill="url(#tbt)" rx="2"/><rect x="374" y="1050" width="153" height="10" fill="url(#tbt)" rx="2"/><rect x="531" y="1050" width="153" height="10" fill="url(#tbt)" rx="2"/><rect x="688" y="1050" width="153" height="10" fill="url(#tbt)" rx="2"/><rect x="845" y="1050" width="153" height="10" fill="url(#tbt)" rx="2"/><rect x="1002" y="1050" width="153" height="10" fill="url(#tbt)" rx="2"/><rect x="1159" y="1050" width="153" height="10" fill="url(#tbt)" rx="2"/><rect x="1316" y="1050" width="153" height="10" fill="url(#tbt)" rx="2"/><rect x="1473" y="1050" width="144" height="10" fill="url(#tbt)" rx="2"/>
<rect x="1906" y="1049" width="14" height="11" fill="#8aa0b8"/>
<circle cx="26" cy="1066" r="20" fill="url(#orb)"/>

<!-- RIGHT TOOLBAR -->
<rect x="1765" y="86" width="155" height="165" fill="#4c9a8c"/>
<rect x="1765" y="250" width="155" height="243" fill="#707070"/>
<rect x="1765" y="493" width="155" height="2" fill="#2e6b5f"/><rect x="1765" y="493" width="2" height="445" fill="#2e6b5f"/>
<rect x="1767" y="598.5" width="160" height="235" fill="none" stroke="#3c8c00"/>
<rect x="1769" y="683" width="151" height="123" fill="#f00"/>
<g transform="translate(1600,600) scale(.3333)" class="px">
<path d="M620,257H865V270H828V280H845V292H860V430H815V438H832V458H848V438H863V602H623V438H630V432H623V292H640V280H650V268H620Z" fill="none" stroke="#0ff" stroke-width="5"/>
<rect x="625" y="582" width="28" height="12" fill="#0ff"/><rect x="852" y="582" width="12" height="12" fill="#0ff"/><path d="M612,592L632,612M632,592L612,612" stroke="#0ff" stroke-width="3"/>
</g>
<rect x="1765" y="938" width="155" height="45" fill="#55cdae"/><rect x="1765" y="938" width="155" height="2" fill="#bdeadb"/><rect x="1765" y="981" width="155" height="2" fill="#bdeadb"/>
<text x="1769" y="958" style="font:bold 14px 'Liberation Mono',monospace;fill:#000" textLength="116" lengthAdjust="spacing">X = 3.539329"</text>
<text x="1769" y="973" style="font:bold 14px 'Liberation Mono',monospace;fill:#000" textLength="116" lengthAdjust="spacing">Y = 1.930443"</text>

<g clip-path="url(#cpR)">
<!-- row1 -->
<g transform="translate(1767,88)"><use href="#bt"/><use href="#iu"/></g>
<g transform="translate(1807,88)"><use href="#bt"/><use href="#id"/></g>
<g transform="translate(1847,88)"><use href="#bt"/><path class="k" d="M9,18L19,8L29,18M12,16V30H26V16M16,30V20H22V30" stroke-width="1.5"/></g>
<g transform="translate(1887,88)"><use href="#bt"/><path class="k" d="M9,9H29V29H9ZM19,9V22M9,22H29"/><text x="22" y="20" style="font:5px 'Liberation Sans',sans-serif">XY</text></g>
<!-- row2 -->
<g transform="translate(1767,128)"><use href="#bt"/><use href="#il"/></g>
<g transform="translate(1807,128)"><use href="#bt"/><use href="#ir"/></g>
<g transform="translate(1847,128)"><use href="#bt"/><rect x="20" y="12" width="12" height="15" class="k"/><path d="M9,15L14,11V14Q18,14 18,20T13,27" class="k"/><path d="M7,15L13,10V18Z"/></g>
<g transform="translate(1887,128)"><use href="#bt"/><path d="M33,12H12V20H30V28H7" fill="none" stroke="#000" stroke-width="2"/></g>
<!-- row3 -->
<g transform="translate(1767,168)"><use href="#bt"/><use href="#ifit"/></g>
<g transform="translate(1807,168)"><use href="#bt"/><use href="#ifit2"/></g>
<g transform="translate(1847,168)"><use href="#bt"/><text x="8" y="25" style="font:bold 15px 'Liberation Sans',sans-serif" textLength="22" lengthAdjust="spacingAndGlyphs">1:2</text></g>
<g transform="translate(1887,168)"><use href="#bt"/><text x="14" y="26" style="font:bold 18px 'Liberation Sans',sans-serif">?</text></g>
<!-- row4 -->
<g transform="translate(1767,208)"><use href="#bt"/><path d="M8,9H26M24,6L30,9L24,12" stroke="#000" stroke-width="2.5" fill="none"/><rect x="9" y="15" width="20" height="4" class="kk"/><ellipse cx="21" cy="26" rx="7" ry="5.500" class="kk"/></g>
<g transform="translate(1807,208)"><use href="#bt"/><rect x="5" y="5" width="28" height="28" fill="#9fdcdc"/><path d="M7,14H31M7,24H31M14,7V31M24,7V31" stroke="#b0a0a0"/></g>
<g transform="translate(1847,208)"><use href="#bt"/><rect x="2" y="2" width="34" height="34" fill="none" stroke="#f00" stroke-width="3"/><rect x="22" y="7" width="11" height="26" fill="none" stroke="#000"/><circle cx="27" cy="12" r="4" fill="#f00"/><circle cx="27" cy="20" r="3" fill="none" stroke="#000"/><circle cx="27" cy="28" r="3" fill="none" stroke="#000"/><path d="M15,8V19H8V28M12,19H21V30" stroke="#f00" fill="none"/><circle cx="16" cy="9" r="3" fill="#00f"/><circle cx="8" cy="19" r="3" fill="#f00"/><circle cx="10" cy="30" r="3" fill="#00f"/></g>
<g transform="translate(1887,208)"><use href="#bt"/><rect x="2" y="2" width="34" height="34" fill="none" stroke="#f00" stroke-width="3"/><rect x="22" y="7" width="11" height="26" fill="none" stroke="#000"/><circle cx="27" cy="12" r="4" fill="#f00"/><circle cx="27" cy="20" r="3" fill="none" stroke="#000"/><circle cx="27" cy="28" r="3" fill="none" stroke="#000"/><path d="M15,8V19H8V28" stroke="#000" fill="none"/><circle cx="16" cy="9" r="3"/><circle cx="8" cy="19" r="3" fill="#f00"/><circle cx="10" cy="30" r="3"/></g>
<!-- row5 -->
<g transform="translate(1767,252)"><use href="#bw"/><circle cx="16" cy="22" r="6"/><path d="M20,16L28,8M24,7H30V13" stroke="#000" stroke-width="2" fill="none"/></g>
<g transform="translate(1807,252)"><use href="#bw"/><rect x="4" y="4" width="30" height="30" fill="#000"/><rect x="17" y="9" width="12" height="12" fill="none" stroke="#f00" stroke-width="2"/><rect x="8" y="25" width="7" height="7" fill="none" stroke="#00f" stroke-width="2"/><path d="M17,9L11,25M29,21L15,30" stroke="#fff" fill="none"/></g>
<g transform="translate(1847,252)"><use href="#bw"/><rect x="7" y="17" width="24" height="6"/><path d="M8,13V17M11,14V17M14,13V17M17,14V17M20,13V17M23,14V17M26,13V17M29,14V17" stroke="#000"/></g>
<g transform="translate(1887,252)"><use href="#bw"/><circle cx="19" cy="19" r="7"/><rect x="8" y="8" width="22" height="22" fill="none" stroke="#000" stroke-dasharray="2 2"/></g>
<!-- row6 -->
<g transform="translate(1767,292)"><use href="#bg"/><path d="M11,13V26H26" stroke="#00f" stroke-width="3" fill="none"/><circle cx="11" cy="11" r="4" fill="#00f"/><circle cx="27" cy="11" r="4" fill="#f00"/><circle cx="11" cy="26" r="4" fill="#00f"/><circle cx="27" cy="26" r="4" fill="#00f"/></g>
<g transform="translate(1807,292)"><use href="#bg"/><path d="M12,13L26,27M26,13L12,27" stroke="#000" stroke-width="2"/><rect x="16" y="17" width="6" height="6" fill="#00f"/></g>
<g transform="translate(1847,292)"><use href="#bg"/><circle cx="27" cy="11" r="4" fill="#f00"/><circle cx="11" cy="27" r="3.5" fill="none" stroke="#00f" stroke-width="2"/><path d="M16,22L22,16" stroke="#000"/></g>
<g transform="translate(1887,292)"><use href="#bg"/><circle cx="27" cy="11" r="4" fill="#f00"/><circle cx="11" cy="27" r="4" fill="#00f"/><path d="M16,22L22,16" stroke="#000"/></g>
<!-- row7 -->
<g transform="translate(1767,332)"><use href="#bg"/><path d="M9,24L20,12" stroke="#f00" stroke-width="3"/><path d="M9,27H30" stroke="#00f" stroke-width="3"/><path d="M26,12L22,8M22,8H25M22,8V11" stroke="#000"/></g>
<g transform="translate(1807,332)"><use href="#bg"/><path d="M9,27L21,13" stroke="#f00" stroke-width="3"/><path d="M9,27L17,18" stroke="#00f" stroke-width="3"/><path d="M23,14L28,9" stroke="#000"/></g>
<g transform="translate(1847,332)"><use href="#bg"/><path d="M24,10Q26,22 16,23M14,21L13,24L17,26" class="k" stroke-width="2"/></g>
<g transform="translate(1887,332)"><use href="#bg"/><path d="M10,10H17V19" stroke="#00f" stroke-width="2.5" fill="none"/><path d="M22,19V10H31V14H24" stroke="#f00" stroke-width="2.5" fill="#f00"/><path d="M19,7V30" stroke="#000"/></g>
<!-- row8 -->
<g transform="translate(1767,372)"><use href="#bg"/><rect x="21" y="6" width="11" height="11" fill="#f00"/><circle cx="26.5" cy="11.5" r="3" fill="#cdcdcd"/><rect x="6" y="21" width="11" height="11" fill="none" stroke="#00f"/><circle cx="11.5" cy="26.5" r="4" fill="#00f"/><path d="M17,21L21,17" stroke="#000"/></g>
<g transform="translate(1807,372)"><use href="#bg"/><path d="M9,19H30" stroke="#f00" stroke-width="3"/><path d="M16,19H22" stroke="#00f" stroke-width="3"/></g>
<g transform="translate(1847,372)"><use href="#bg"/><path d="M9,8V30M29,8V30" stroke="#000"/><path d="M10,19H28" stroke="#00f"/><rect x="15" y="14" width="8" height="10" fill="#cdcdcd" stroke="#00f"/></g>
<g transform="translate(1887,372)"><use href="#bg"/><rect x="8" y="8" width="14" height="18" fill="#00f"/><rect x="20" y="12" width="14" height="18" fill="#00f"/><circle cx="14" cy="14" r="4" fill="#cdcdcd"/><circle cx="26" cy="24" r="6" fill="#cdcdcd"/></g>
<!-- row9 -->
<g transform="translate(1767,412)"><use href="#bg"/><path d="M8,27L19,9L30,27Z" fill="none" stroke="#f00" stroke-width="2.5"/><path d="M8,27H30" stroke="#00f" stroke-width="3"/><path d="M19,17V24M17,19L19,17L21,19" stroke="#000"/></g>
<g transform="translate(1807,412)"><use href="#bg"/><path d="M8,30L19,6L30,30" fill="none" stroke="#f00" stroke-width="2.5"/><path d="M9,30L19,19L29,30" fill="none" stroke="#00f" stroke-width="2.5"/><path d="M19,11V18M17,13L19,11L21,13" stroke="#000"/></g>
<g transform="translate(1847,412)"><use href="#bg"/><path d="M7,30L14,8H24L31,30" fill="none" stroke="#f00" stroke-width="2.5"/><path d="M7,30L11,24H27L31,30" fill="none" stroke="#00f" stroke-width="2.5"/><path d="M19,12V20M17,14L19,12L21,14" stroke="#000"/></g>
<g transform="translate(1887,412)"><use href="#bg"/><path d="M7,25L14,8H24L31,25" fill="none" stroke="#f00" stroke-width="2.5"/><path d="M6,24H32" stroke="#00f" stroke-width="2.5"/><path d="M5,22L10,27M10,22L5,27M28,22L33,27M33,22L28,27M19,12V20" stroke="#000"/></g>
<!-- row10 -->
<g transform="translate(1767,452)"><use href="#by"/><path d="M15,9L15,25L19,21L23,30L26,29L22,20L27,19Z"/></g>
<g transform="translate(1807,452)"><use href="#by"/><rect x="9" y="9" width="20" height="20" fill="none" stroke="#f00" stroke-width="2"/><path d="M15,10L15,24L18,20L22,28L25,27L21,19L26,18Z"/></g>
<g transform="translate(1847,452)"><use href="#by"/><path d="M12,9H28V29H14L9,24V13Z" fill="none" stroke="#f00" stroke-width="2"/><path d="M15,10L15,24L18,20L22,28L25,27L21,19L26,18Z"/></g>
<g transform="translate(1887,452)"><use href="#by"/><circle cx="10" cy="20" r="2.5" fill="#f00" stroke="#000" stroke-width=".5"/><circle cx="29" cy="11" r="2.5" fill="#0f0" stroke="#000" stroke-width=".5"/><circle cx="9" cy="29" r="2.5" fill="#0f0" stroke="#000" stroke-width=".5"/><path d="M10,6V18M12,29H17V17H26V12" stroke="#000" fill="none"/><path d="M23,16L23,28L26,25L29,32L31,31L28,24L32,23Z"/></g>
</g>

<!-- POPVIEW 3 -->
<rect x="1103" y="96" width="537" height="311" rx="6" fill="url(#wg3)" stroke="#bbb"/>
<rect x="1103.5" y="96.5" width="536" height="310" rx="6" fill="none" stroke="#999"/>
<rect x="1108" y="122" width="527" height="279" fill="#111" stroke="#888"/>
<rect x="1109" y="124" width="524" height="275" fill="#55cdae"/>
<rect x="1109" y="124" width="490" height="248" fill="#2e6b5f"/><rect x="1112" y="128" width="481" height="240" fill="#000"/><rect x="1112" y="368" width="487" height="3" fill="#cdeee6"/><rect x="1595" y="124" width="3" height="247" fill="#cdeee6"/>
<rect x="1599" y="124" width="34" height="250" fill="#000"/>
<rect x="1111" y="374" width="520" height="25" fill="#000"/><rect x="1112" y="375" width="519" height="23" fill="#9fdcdc"/><path d="M1112,398V375H1631" stroke="#dff" fill="none"/><path d="M1112,397.500H1631V375" stroke="#5c8a85" stroke-width="1.500" fill="none"/>
<g clip-path="url(#cp3)"><g transform="translate(1100,90) scale(.3509,.3333)" class="g px">
<path d="M125,117h143v108h-143zM279,117h134v108h-134zM426,117h198v111h-198zM125,252h143v123h-143zM279,252h134v123h-134zM426,240h198v135h-198zM268,145h11v23h-11zM194,387h265v200h-265zM1069,117h203v111h-203zM1294,117h111v111h-111zM1272,147h22v21h-22zM1069,240h203v135h-203zM1294,252h111v141h-111zM1272,293h22v22h-22zM875,117h23v233h-23zM533,414h131v150h-131zM690,414h125v150h-125zM827,414h128v150h-128zM978,414h131v150h-131zM1140,426h154v147h-154zM1109,477h31v24h-31zM536,579h131v150h-131zM693,579h128v150h-128zM832,582h129v150h-129zM984,582h134v150h-134zM1140,633h154v147h-154zM592,564h21v15h-21zM1041,564h20v18h-20zM1368,528h37v150h-37zM616,765h139v69h-139zM131,385h20v20h-20z"/>
<path d="M268,587V655L355,745H530M532,745V834M945,732V768M1060,732V762L1130,834M1405,735L1335,810V834" fill="none" stroke="#ba9400" stroke-width="20"/>
<g class="r"><rect x="125" y="375" width="143" height="10"/><rect x="322" y="387" width="9" height="200"/><rect x="413" y="143" width="13" height="25"/><rect x="413" y="293" width="13" height="24"/><rect x="815" y="477" width="12" height="24"/><rect x="821" y="645" width="11" height="22"/></g>
</g></g>
<g transform="translate(1100,90) scale(.3509,.3333)"><path class="sc" stroke-width="5" d="M318,122L370,107 425,112 485,155 485,345 465,375 415,375 348,340 325,265 383,137M810,425L783,510 783,570 800,640 860,705 905,690 915,650 925,600 900,510 840,448"/></g>
<g transform="translate(1601.5,129.5) scale(.76)"><use href="#rim"/><use href="#iw"/></g>
<g transform="translate(1601.5,164.5) scale(.76)"><use href="#rim"/><use href="#iu"/></g>
<g transform="translate(1601.5,199.5) scale(.76)"><use href="#rim"/><use href="#id"/></g>
<g transform="translate(1601.5,234.5) scale(.76)"><use href="#rim"/><use href="#il"/></g>
<g transform="translate(1601.5,269.5) scale(.76)"><use href="#rim"/><use href="#ir"/></g>
<g transform="translate(1601.5,304.5) scale(.76)"><use href="#rim"/><use href="#iin"/></g>
<g transform="translate(1601.5,339.5) scale(.7)"><use href="#rim"/><use href="#ifit2"/></g>
<rect x="1106" y="101" width="18" height="18" fill="#ddd" stroke="#555"/><rect x="1107" y="102" width="16" height="4" fill="#1b1b8a"/><path d="M1110,108L1120,117M1120,108L1110,117" stroke="#b5a800" stroke-width="2.5"/>
<text class="pt" x="1130" y="114" textLength="68" lengthAdjust="spacingAndGlyphs">Popview - 3</text>
<path d="M1588,96H1634V112Q1634,115 1631,115H1591Q1588,115 1588,112Z" fill="url(#red)" stroke="#ddd" stroke-width=".6"/>
<text x="1605" y="110" style="font:bold 13px 'Liberation Sans',sans-serif;fill:#fff;stroke:#333;stroke-width:.4">X</text>
<text x="1350" y="391" style="font:bold 13px 'Liberation Mono',monospace;fill:#000" textLength="43" lengthAdjust="spacingAndGlyphs">Close</text>

<!-- POPVIEW 1 -->
<rect x="1187" y="431" width="460" height="426" rx="6" fill="url(#wg1)" stroke="#888"/>
<rect x="1192" y="458" width="451" height="394" fill="#111" stroke="#777"/>
<rect x="1193" y="459" width="448" height="391" fill="#55cdae"/>
<rect x="1193" y="459" width="411" height="364" fill="#2e6b5f"/><rect x="1197" y="463" width="404" height="355" fill="#000"/><rect x="1195" y="819" width="409" height="3" fill="#cdeee6"/><rect x="1601" y="460" width="3" height="362" fill="#cdeee6"/>
<rect x="1605" y="460" width="36" height="363" fill="#55cdae"/>
<rect x="1605" y="460" width="36" height="245" fill="#000"/>
<rect x="1605" y="822" width="36" height="2" fill="#000"/><rect x="1605" y="460" width="2" height="363" fill="#000"/><rect x="1640" y="460" width="1" height="363" fill="#000"/>
<rect x="1195" y="824" width="445" height="26" fill="#000"/><rect x="1196" y="825" width="443" height="23" fill="#9fdcdc"/><path d="M1196,848V825H1639" stroke="#dff" fill="none"/><path d="M1196,847.500H1639V825" stroke="#5c8a85" stroke-width="1.500" fill="none"/>
<g clip-path="url(#cp1)"><g transform="translate(1180,425) scale(.3333)" class="px">
<g class="g">
<polygon points="50,117 210,117 305,213 485,213 510,250 750,250 755,510 565,505 530,470 505,440 230,438 213,420 213,320 80,190 50,190"/>
<path d="M50,320Q130,370 130,440Q130,520 50,565Z"/>
<polygon points="615,117 865,117 798,187 615,187"/>
<rect x="942" y="148" width="163" height="132" rx="4"/>
<polygon points="795,243 860,243 860,255 890,265 890,290 860,295 860,308 795,308"/>
<polygon points="180,553 258,475 430,475 430,540 370,540 330,575 345,610 330,660 340,675 450,675 478,720 440,785 430,810 435,850 405,885 200,885 175,850 177,610"/>
<rect x="443" y="475" width="67" height="65"/>
<circle cx="393" cy="607" r="40"/><circle cx="480" cy="607" r="40"/><circle cx="567" cy="607" r="40"/><circle cx="655" cy="607" r="40"/><circle cx="745" cy="607" r="40"/>
<rect x="393" y="578" width="352" height="62"/>
<polygon points="450,640 495,650 780,640 780,680 890,685 920,710 920,745 905,770 960,820 960,860 945,885 465,885 440,850 450,800 495,750 485,720 495,690"/>
<polygon points="800,325 858,325 860,333 1115,333 1130,350 1130,585 1138,610 1120,640 1085,660 1083,690 1095,745 1140,820 1140,860 1125,885 985,885 968,860 975,810 925,770 930,700 915,650 815,650 795,620 795,600 800,580"/>
<circle cx="1187" cy="607" r="42"/><circle cx="1143" cy="725" r="42"/><circle cx="1187" cy="843" r="42"/><circle cx="1265" cy="607" r="30"/><circle cx="1265" cy="843" r="30"/>
<polygon points="1265,660 1190,725 1210,765 1265,765"/>
<path d="M50,922H1262V942H1226V1015H1262V1035H1205V942H1040V1035H510V942H345V1035H50V1015H325V942H50ZM530,942V1015H1020V942Z" fill-rule="evenodd"/>
<ellipse cx="430" cy="980" rx="50" ry="48"/><ellipse cx="1125" cy="980" rx="50" ry="48"/>
<ellipse cx="243" cy="1143" rx="73" ry="75"/><ellipse cx="50" cy="1143" rx="43" ry="72"/>
</g>
<g class="g"><rect x="495" y="1077" width="30" height="30"/><rect x="563" y="1077" width="30" height="30"/><rect x="635" y="1077" width="30" height="30"/><rect x="705" y="1077" width="30" height="30"/><rect x="777" y="1077" width="30" height="30"/><rect x="848" y="1077" width="30" height="30"/><rect x="918" y="1077" width="30" height="30"/><rect x="990" y="1077" width="30" height="30"/><rect x="1200" y="1077" width="30" height="30"/>
<rect x="423" y="1148" width="30" height="30"/><rect x="495" y="1148" width="30" height="30"/><rect x="563" y="1148" width="30" height="30"/><rect x="635" y="1148" width="30" height="30"/><rect x="705" y="1148" width="30" height="30"/><rect x="777" y="1148" width="30" height="30"/><rect x="848" y="1148" width="30" height="30"/><rect x="918" y="1148" width="30" height="30"/><rect x="990" y="1148" width="30" height="30"/><rect x="1058" y="1148" width="30" height="30"/><rect x="1131" y="1148" width="30" height="30"/><rect x="1200" y="1148" width="30" height="30"/></g>
<g><circle cx="217" cy="207" r="12"/><circle cx="248" cy="207" r="12"/><circle cx="217" cy="240" r="12"/><circle cx="248" cy="240" r="12"/><circle cx="217" cy="276" r="12"/><circle cx="248" cy="276" r="12"/><circle cx="628" cy="134" r="12"/><circle cx="662" cy="134" r="12"/><circle cx="628" cy="170" r="12"/><circle cx="662" cy="170" r="12"/><circle cx="765" cy="134" r="12"/><circle cx="810" cy="134" r="12"/><circle cx="995" cy="268" r="12"/><circle cx="1043" cy="268" r="12"/><circle cx="879" cy="278" r="12"/><circle cx="879" cy="386" r="12"/><circle cx="969" cy="402" r="12"/><circle cx="1008" cy="402" r="12"/><circle cx="1047" cy="402" r="12"/><circle cx="969" cy="438" r="12"/><circle cx="1008" cy="438" r="12"/><circle cx="1047" cy="438" r="12"/><circle cx="497" cy="378" r="12"/><circle cx="524" cy="515" r="12"/><circle cx="58" cy="134" r="12"/></g>
<g class="r"><rect x="259" y="598" width="4" height="18"/><rect x="436" y="598" width="4" height="18"/><rect x="523" y="598" width="4" height="18"/><rect x="613" y="598" width="4" height="18"/><rect x="700" y="598" width="4" height="18"/><rect x="877" y="598" width="4" height="18"/><rect x="964" y="598" width="4" height="18"/><rect x="1054" y="598" width="4" height="18"/>
<rect x="301" y="716" width="4" height="18"/><rect x="568" y="716" width="4" height="18"/><rect x="655" y="716" width="4" height="18"/><rect x="745" y="716" width="4" height="18"/><rect x="832" y="716" width="4" height="18"/><rect x="1009" y="716" width="4" height="18"/>
<rect x="259" y="834" width="4" height="18"/><rect x="346" y="834" width="4" height="18"/><rect x="523" y="834" width="4" height="18"/><rect x="613" y="834" width="4" height="18"/><rect x="700" y="834" width="4" height="18"/><rect x="787" y="834" width="4" height="18"/><rect x="877" y="834" width="4" height="18"/><rect x="1054" y="834" width="4" height="18"/><rect x="390" y="678" width="3" height="92"/></g>
</g></g>
<g transform="translate(1607.5,464.5) scale(.76)"><use href="#rim"/><use href="#iw"/></g>
<g transform="translate(1607.5,499.5) scale(.76)"><use href="#rim"/><use href="#iu"/></g>
<g transform="translate(1607.5,534.5) scale(.76)"><use href="#rim"/><use href="#id"/></g>
<g transform="translate(1607.5,569.5) scale(.76)"><use href="#rim"/><use href="#il"/></g>
<g transform="translate(1607.5,604.5) scale(.76)"><use href="#rim"/><use href="#ir"/></g>
<g transform="translate(1607.5,639.5) scale(.76)"><use href="#rim"/><use href="#iin"/></g>
<g transform="translate(1607.5,674.5) scale(.76)"><use href="#rim"/><use href="#ifit2"/></g>
<g transform="translate(1180,425) scale(.3333)"><path class="sc" stroke-width="5" d="M360,447L180,553 145,572 90,660 85,760 105,820 175,882 270,925 390,965 590,998 1160,1003 1355,940 1390,870 1395,800 1385,740 1325,625 1185,493 1060,438 570,368 505,365 487,375 473,400"/></g>
<rect x="1194" y="438" width="17" height="17" fill="#ddd" stroke="#555"/><rect x="1195" y="439" width="15" height="4" fill="#1b1b8a"/><path d="M1197,445L1207,453M1207,445L1197,453" stroke="#b5a800" stroke-width="2.5"/>
<text class="pt" x="1214" y="449" textLength="67" lengthAdjust="spacingAndGlyphs" style="fill:#ccc">Popview - 1</text>
<path d="M1595,431V446Q1595,450 1599,450H1638Q1642,450 1642,446V431" fill="#2a2a2a" stroke="#888"/>
<text x="1613" y="445" style="font:bold 13px 'Liberation Sans',sans-serif;fill:#eee">X</text>
<text x="1395" y="841" style="font:bold 13px 'Liberation Mono',monospace;fill:#000" textLength="43" lengthAdjust="spacingAndGlyphs">Close</text>

<!-- POPVIEW 2 -->
<rect x="113" y="520" width="284" height="397" rx="6" fill="url(#wg2)" stroke="#888"/>
<rect x="119" y="547" width="273" height="364" fill="#111" stroke="#777"/>
<rect x="120" y="548" width="270" height="361" fill="#55cdae"/>
<rect x="120" y="548" width="233" height="332" fill="#2e6b5f"/><rect x="123" y="552" width="227" height="326" fill="#000"/><rect x="121" y="879" width="233" height="2" fill="#cdeee6"/><rect x="351" y="549" width="3" height="331" fill="#cdeee6"/>
<rect x="355" y="549" width="35" height="331" fill="#55cdae"/><rect x="355" y="549" width="35" height="247" fill="#000"/><rect x="355" y="549" width="2" height="331" fill="#000"/>
<rect x="121" y="881" width="268" height="27" fill="#000"/><rect x="122" y="882" width="266" height="25" fill="#9fdcdc"/><path d="M122,907V882H388" stroke="#dff" fill="none"/><path d="M122,906.500H388V882" stroke="#5c8a85" stroke-width="1.500" fill="none"/>
<g clip-path="url(#cp2)"><g transform="translate(100,510) scale(.3333)" class="px">
<g class="g">
<polygon points="72,130 140,130 145,280 105,325 72,325"/>
<rect x="202" y="138" width="46" height="48" rx="3"/><rect x="277" y="138" width="48" height="48" rx="3"/><rect x="360" y="138" width="48" height="48" rx="3"/>
<polygon points="448,130 610,130 610,155 470,160 450,150"/>
<polygon points="455,180 570,178 603,210 603,315 650,355 655,530 600,530 600,375 545,320 545,260 530,235 460,235 450,210"/>
<rect x="645" y="205" width="105" height="35"/>
<ellipse cx="225" cy="240" rx="25" ry="33"/><ellipse cx="362" cy="285" rx="44" ry="30"/>
<polygon points="75,420 150,350 195,350 195,400 150,425 150,470 75,475"/>
<polygon points="155,430 260,392 315,392 315,420 270,455 150,470"/>
<polygon points="390,320 462,320 462,525 440,530 340,530 330,545 230,545 260,490 390,395"/>
<polygon points="475,320 530,320 585,385 585,530 475,530"/>
<polygon points="622,275 700,270 700,530 660,530 655,355 622,310"/>
<polygon points="720,270 750,270 750,530 720,530"/>
<polygon points="205,545 325,545 330,605 350,625 330,655 325,692 170,692 190,620 205,600"/>
<polygon points="355,560 655,560 655,585 715,590 720,645 355,645"/>
<circle cx="100" cy="566" r="20"/><circle cx="143" cy="566" r="20"/><circle cx="185" cy="566" r="20"/><circle cx="350" cy="566" r="18"/><circle cx="675" cy="566" r="20"/><circle cx="717" cy="566" r="20"/>
<circle cx="85" cy="620" r="20"/><circle cx="125" cy="620" r="20"/><circle cx="163" cy="620" r="20"/><circle cx="738" cy="620" r="15"/>
<circle cx="103" cy="673" r="20"/><circle cx="145" cy="673" r="20"/><circle cx="350" cy="673" r="20"/><circle cx="390" cy="673" r="20"/><circle cx="432" cy="673" r="20"/><circle cx="473" cy="673" r="20"/><circle cx="513" cy="673" r="20"/><circle cx="555" cy="673" r="20"/><circle cx="597" cy="673" r="20"/><circle cx="637" cy="673" r="20"/><circle cx="677" cy="673" r="20"/><circle cx="717" cy="673" r="20"/><circle cx="748" cy="673" r="15"/>
<rect x="72" y="712" width="678" height="8"/><rect x="72" y="757" width="165" height="8"/><rect x="312" y="757" width="248" height="8"/><rect x="637" y="757" width="113" height="8"/><rect x="225" y="712" width="12" height="53"/><rect x="312" y="712" width="10" height="53"/><rect x="550" y="712" width="10" height="53"/><rect x="637" y="712" width="10" height="53"/>
<ellipse cx="274" cy="738" rx="24" ry="26"/><ellipse cx="597" cy="738" rx="24" ry="26"/>
<rect x="72" y="862" width="678" height="11"/>
</g>
<path d="M84,790H232M314,790H560M642,790H750" fill="none" stroke="#ba9400" stroke-width="15" stroke-dasharray="16 17"/>
<path d="M84,823H750" fill="none" stroke="#ba9400" stroke-width="15" stroke-dasharray="16 17"/>
<path d="M418,345V510M460,385V400M698,385H750M480,520V540M500,530V540M525,530V540M545,515V540M565,530V540M105,470H125M165,470H190" class="v" stroke-dasharray="7 17" stroke-width="10"/>
<g class="r"><rect x="225" y="562" width="4" height="8"/><rect x="248" y="562" width="3" height="8"/><rect x="290" y="562" width="3" height="8"/><rect x="370" y="562" width="3" height="8"/><rect x="412" y="562" width="3" height="8"/><rect x="452" y="562" width="4" height="8"/><rect x="492" y="562" width="3" height="8"/><rect x="535" y="562" width="3" height="8"/><rect x="575" y="562" width="3" height="8"/><rect x="615" y="562" width="3" height="8"/><rect x="695" y="562" width="5" height="8"/><rect x="227" y="616" width="4" height="9"/><rect x="268" y="616" width="3" height="9"/><rect x="308" y="616" width="4" height="9"/><rect x="390" y="616" width="3" height="9"/><rect x="432" y="616" width="4" height="9"/><rect x="473" y="616" width="3" height="9"/><rect x="513" y="616" width="3" height="9"/><rect x="555" y="616" width="3" height="9"/><rect x="594" y="598" width="2" height="44"/><rect x="636" y="616" width="3" height="9"/><rect x="677" y="616" width="3" height="9"/><rect x="205" y="670" width="4" height="10"/><rect x="248" y="670" width="3" height="10"/><rect x="290" y="670" width="3" height="10"/></g>
</g></g>
<g transform="translate(357.5,553.5) scale(.76)"><use href="#rim"/><use href="#iw"/></g>
<g transform="translate(357.5,588.5) scale(.76)"><use href="#rim"/><use href="#iu"/></g>
<g transform="translate(357.5,623.5) scale(.76)"><use href="#rim"/><use href="#id"/></g>
<g transform="translate(357.5,658.5) scale(.76)"><use href="#rim"/><use href="#il"/></g>
<g transform="translate(357.5,693.5) scale(.76)"><use href="#rim"/><use href="#ir"/></g>
<g transform="translate(357.5,728.5) scale(.76)"><use href="#rim"/><use href="#iin"/></g>
<g transform="translate(357.5,763.5) scale(.76)"><use href="#rim"/><use href="#ifit2"/></g>
<g transform="translate(100,510) scale(.3333)"><path class="sc" stroke-width="5" d="M375,447L270,462 23,512 -36,693 95,790 310,820 540,780 700,680 770,610 768,545 595,415"/></g>
<rect x="120" y="527" width="17" height="17" fill="#ddd" stroke="#555"/><rect x="121" y="528" width="15" height="4" fill="#1b1b8a"/><path d="M123,534L133,542M133,534L123,542" stroke="#b5a800" stroke-width="2.5"/>
<text class="pt" x="142" y="538" textLength="67" lengthAdjust="spacingAndGlyphs">Popview - 2</text>
<path d="M345,520V535Q345,539 349,539H388Q392,539 392,535V520" fill="#2a2a2a" stroke="#888"/>
<text x="363" y="534" style="font:bold 13px 'Liberation Sans',sans-serif;fill:#eee">X</text>
<text x="233" y="900" style="font:bold 13px 'Liberation Mono',monospace;fill:#000" textLength="44" lengthAdjust="spacingAndGlyphs">Close</text>
</svg>
</body></html>
